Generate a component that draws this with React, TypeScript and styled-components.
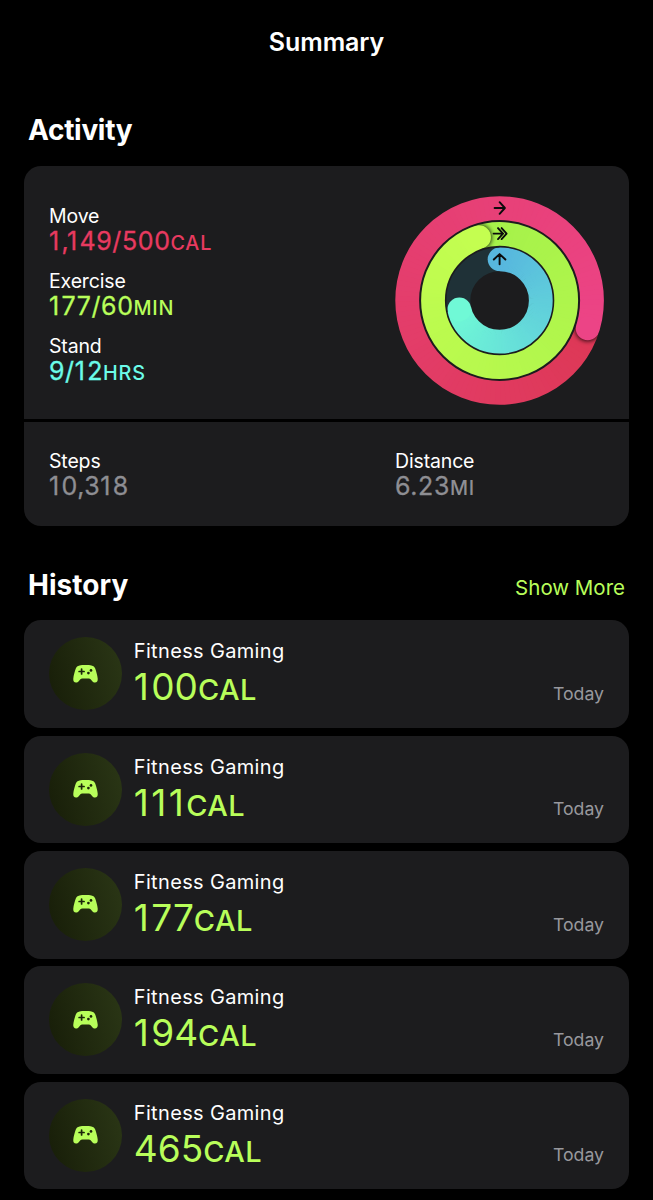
import React from "react";
import styled, { createGlobalStyle } from "styled-components";

const GlobalStyle = createGlobalStyle`
  *, *::before, *::after { box-sizing: border-box; }
  html, body { margin: 0; background: #000; }
  body { font-family: Inter, "Liberation Sans", sans-serif; color: #fff; -webkit-font-smoothing: antialiased; }
`;

const Page = styled.main`
  width: 653px;
  height: 1200px;
  overflow: hidden;
  background: #000;
  padding: 0 24px;
  display: flex;
  flex-direction: column;
`;

const TopBar = styled.header`
  height: 84px;
  display: flex;
  align-items: center;
  justify-content: center;
`;

const ScreenTitle = styled.h1`
  margin: 0;
  font-size: 25px;
  font-weight: 600;
  line-height: 30px;
  letter-spacing: -0.1px;
`;

const SectionHead = styled.div<{ $height: number; $bottom: number }>`
  height: ${(p) => p.$height}px;
  padding: 0 4px ${(p) => p.$bottom}px;
  display: flex;
  align-items: flex-end;
  justify-content: space-between;
`;

const SectionTitle = styled.h2<{ $tracking: number }>`
  margin: 0;
  font-size: 28px;
  font-weight: 700;
  line-height: 34px;
  letter-spacing: ${(p) => p.$tracking}px;
`;

const ShowMore = styled.a`
  color: #b8fe5a;
  font-size: 20.5px;
  line-height: 28px;
`;

const ActivityCard = styled.section`
  height: 360px;
  display: flex;
  flex-direction: column;
  gap: 3px;
  border-radius: 17px;
  overflow: hidden;
`;

const GoalsPanel = styled.div`
  height: 253px;
  background: #1c1c1e;
  padding: 30px 25px 0;
  display: flex;
  justify-content: space-between;
`;

const Goals = styled.div`
  display: flex;
  flex-direction: column;
  gap: 14.7px;
  padding-top: 8.4px;
`;

const TotalsPanel = styled.div`
  height: 104px;
  background: #1c1c1e;
  padding: 27px 25px 0;
  display: grid;
  grid-template-columns: 346px 1fr;
`;

const Metric = styled.div`
  display: flex;
  flex-direction: column;
`;

const Label = styled.span`
  font-size: 19.5px;
  line-height: 24px;
  letter-spacing: -0.15px;
`;

const Value = styled.span<{ $color: string }>`
  color: ${(p) => p.$color};
  font-size: 25px;
  font-weight: 400;
  line-height: 26px;
  letter-spacing: 0.6px;
  -webkit-text-stroke: 0.3px currentColor;
`;

const WideOne = styled.span`
  margin-right: 0.065em;
`;

const Unit = styled.span<{ $size: number; $tracking: number }>`
  font-size: ${(p) => p.$size}px;
  font-weight: 500;
  line-height: 0;
  letter-spacing: ${(p) => p.$tracking}px;
  -webkit-text-stroke: 0;
`;

const HistoryList = styled.div`
  display: flex;
  flex-direction: column;
  gap: 7.7px;
`;

const Workout = styled.article`
  height: 107.6px;
  flex: none;
  border-radius: 17px;
  background: #1c1c1e;
  padding: 17px 25px 17px 24.6px;
  display: flex;
`;

const Badge = styled.div`
  width: 73px;
  height: 73px;
  flex: none;
  border-radius: 50%;
  background: linear-gradient(75deg, #171d08, #2b3716);
  display: flex;
  align-items: center;
  justify-content: center;
`;

const WorkoutText = styled.div`
  flex: 1;
  padding-left: 12.2px;
  display: flex;
  flex-direction: column;
`;

const WorkoutName = styled.span`
  font-size: 20px;
  line-height: 28px;
  letter-spacing: 0.34px;
`;

const WorkoutValue = styled.span`
  color: #b8fe5a;
  font-size: 37px;
  font-weight: 400;
  line-height: 44px;
`;

const Day = styled.span`
  align-self: flex-end;
  color: #98989d;
  font-size: 17.7px;
  line-height: 22px;
  height: 28px;
`;

const RingsSvg = styled.svg`
  display: block;
  flex: none;
  width: 210px;
  height: 210px;
  overflow: visible;
`;

type RGB = [number, number, number];

const mix = (a: RGB, b: RGB, t: number) =>
  `rgb(${a.map((v, i) => Math.round(v + (b[i] - v) * t)).join(",")})`;

const point = (r: number, deg: number) => {
  const a = (deg * Math.PI) / 180;
  return [r * Math.sin(a), -r * Math.cos(a)];
};

const arc = (r: number, from: number, to: number) => {
  const [x1, y1] = point(r, from);
  const [x2, y2] = point(r, to);
  return `M${x1.toFixed(3)} ${y1.toFixed(3)}A${r} ${r} 0 0 1 ${x2.toFixed(3)} ${y2.toFixed(3)}`;
};

const THICKNESS = 23.8;

interface RingProps {
  id: string;
  r: number;
  start: number;
  sweep: number;
  from: RGB;
  to: RGB;
  track?: string;
}

function Ring({ id, r, start, sweep, from, to, track }: RingProps) {
  const steps = 120;
  const step = sweep / steps;
  const shadowAt = 100;
  const [ex, ey] = point(r, start + sweep);
  const [sx, sy] = point(r, start);
  const full = sweep >= 360;
  const segment = (i: number) => (
    <path
      key={i}
      d={arc(r, start + i * step, start + (i + (i === steps - 1 ? 1 : 1.6)) * step)}
      stroke={mix(from, to, i / (steps - 1))}
      strokeWidth={THICKNESS + 3}
      fill="none"
    />
  );
  const indices = Array.from({ length: steps }, (_, i) => i);
  return (
    <g mask={`url(#${id})`}>
      <mask id={id} maskUnits="userSpaceOnUse" x="-110" y="-110" width="220" height="220">
        <circle r={r} fill="none" stroke="#fff" strokeWidth={THICKNESS} />
      </mask>
      {track && <circle r={r} fill="none" stroke={track} strokeWidth={THICKNESS + 3} />}
      {!full && <circle cx={sx} cy={sy} r={THICKNESS / 2} fill={mix(from, to, 0)} />}
      {indices.slice(0, shadowAt).map(segment)}
      {full && <circle cx={ex} cy={ey} r={THICKNESS / 2 + 0.8} fill="#000" opacity="0.8" filter="url(#soft)" />}
      {indices.slice(shadowAt).map(segment)}
      <circle cx={ex} cy={ey} r={THICKNESS / 2} fill={mix(from, to, 1)} />
    </g>
  );
}

function ActivityRings() {
  return (
    <RingsSvg viewBox="-105.6 -104.5 210 210" role="img" aria-label="Activity rings">
      <defs>
        <filter id="soft" x="-50%" y="-50%" width="200%" height="200%">
          <feGaussianBlur stdDeviation="2" />
        </filter>
      </defs>
      <Ring id="move" r={92.4} start={107.6} sweep={360} from={[221, 56, 86]} to={[236, 68, 134]} />
      <Ring id="exercise" r={66.6} start={-18} sweep={360} from={[165, 241, 74]} to={[196, 254, 80]} />
      <Ring id="stand" r={41.2} start={0} sweep={257.5} from={[87, 182, 222]} to={[112, 249, 214]} track="#1f3137" />
      <g fill="none" stroke="#0b0b0c" strokeWidth="1.9" strokeLinecap="round" strokeLinejoin="round">
        <path d="M-5 -92.5H5M0 -98.3L5.3 -92.5L0 -86.7" />
        <path d="M-6 -66.9H3.6M-1.6 -72.4L3.4 -66.9L-1.6 -61.4M2 -72.4L7 -66.9L2 -61.4" />
        <path d="M0 -36.2V-46.2M-5.8 -41L0 -46.4L5.8 -41" />
      </g>
    </RingsSvg>
  );
}

function Gamepad() {
  return (
    <svg width="25" height="18" viewBox="0 0 25 18">
      <path
        fill="#b8fe5a"
        d="M6.6 0.4C9 0 16 0 18.4 0.4C20.6 0.8 21.6 1.8 22.2 3.6C23.2 6.4 24.4 10.6 24.7 13.4C25 16 23.9 17.4 22 17.4C20.8 17.4 20 16.9 19.1 15.9L17.6 14.2C17.1 13.6 16.6 13.4 15.8 13.4H9.2C8.4 13.4 7.9 13.6 7.4 14.2L5.9 15.9C5 16.9 4.2 17.4 3 17.4C1.1 17.4 0 16 0.3 13.4C0.6 10.6 1.8 6.4 2.8 3.6C3.4 1.8 4.4 0.8 6.6 0.4Z"
      />
      <path d="M8.6 4V9M6.1 6.5H11.1" stroke="#1b230b" strokeWidth="1.7" strokeLinecap="round" />
      <circle cx="15.4" cy="8.1" r="1.35" fill="#1b230b" />
      <circle cx="18" cy="5.4" r="1.35" fill="#1b230b" />
    </svg>
  );
}

/* Numerals with a little extra room after each narrow "1". */
function Figures({ text }: { text: string }) {
  return (
    <>
      {text.split("").map((ch, i) => (ch === "1" ? <WideOne key={i}>1</WideOne> : ch))}
    </>
  );
}

const goals = [
  { label: "Move", value: "1,149/500", unit: "CAL", color: "#e83a60" },
  { label: "Exercise", value: "177/60", unit: "MIN", color: "#b8fe5a" },
  { label: "Stand", value: "9/12", unit: "HRS", color: "#6bfbe9" },
];

const totals = [
  { label: "Steps", value: "10,318", unit: "", color: "#8e8e93" },
  { label: "Distance", value: "6.23", unit: "MI", color: "#8e8e93" },
];

const workouts = [100, 111, 177, 194, 465];

function MetricBlock({ label, value, unit, color }: (typeof goals)[number]) {
  return (
    <Metric>
      <Label>{label}</Label>
      <Value $color={color}>
        <Figures text={value} />
        {unit && (
          <Unit $size={19.8} $tracking={0.8}>
            {unit}
          </Unit>
        )}
      </Value>
    </Metric>
  );
}

export default function App() {
  return (
    <>
      <GlobalStyle />
      <Page>
        <TopBar>
          <ScreenTitle>Summary</ScreenTitle>
        </TopBar>
        <SectionHead $height={82} $bottom={19}>
          <SectionTitle $tracking={-0.3}>Activity</SectionTitle>
        </SectionHead>
        <ActivityCard>
          <GoalsPanel>
            <Goals>
              {goals.map((g) => (
                <MetricBlock key={g.label} {...g} />
              ))}
            </Goals>
            <ActivityRings />
          </GoalsPanel>
          <TotalsPanel>
            {totals.map((t) => (
              <MetricBlock key={t.label} {...t} />
            ))}
          </TotalsPanel>
        </ActivityCard>
        <SectionHead $height={94.4} $bottom={18}>
          <SectionTitle $tracking={0.05}>History</SectionTitle>
          <ShowMore>Show More</ShowMore>
        </SectionHead>
        <HistoryList>
          {workouts.map((calories) => (
            <Workout key={calories}>
              <Badge>
                <Gamepad />
              </Badge>
              <WorkoutText>
                <WorkoutName>Fitness Gaming</WorkoutName>
                <WorkoutValue>
                  <Figures text={String(calories)} />
                  <Unit $size={29} $tracking={0.5}>
                    CAL
                  </Unit>
                </WorkoutValue>
              </WorkoutText>
              <Day>Today</Day>
            </Workout>
          ))}
        </HistoryList>
      </Page>
    </>
  );
}
